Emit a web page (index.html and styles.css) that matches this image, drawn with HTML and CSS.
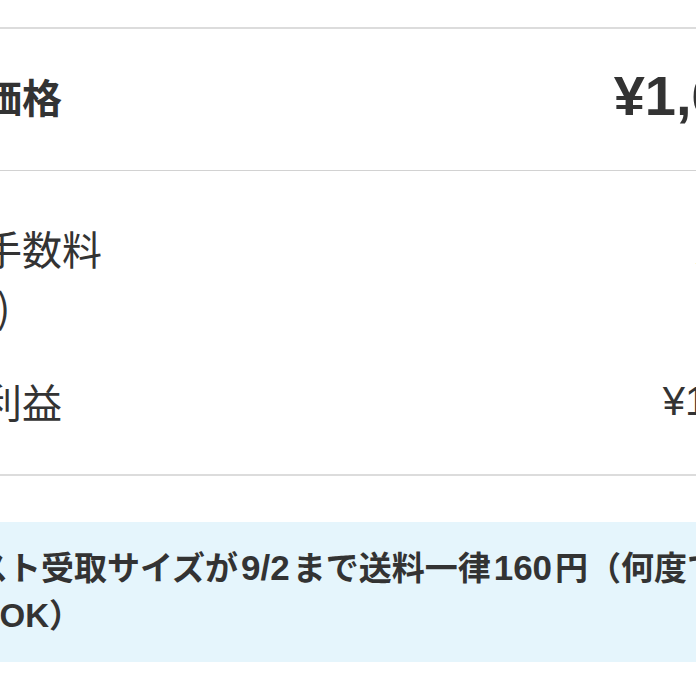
FILE: index.html
```html
<!DOCTYPE html>
<html lang="ja">
<head>
    <meta charset="UTF-8">
    <title>販売価格</title>
    <link rel="stylesheet" href="styles.css">
</head>
<body>
    <div class="sheet">
        <div class="price-row">
            <span class="label">販売価格</span>
            <span class="price">¥1,600</span>
        </div>

        <div class="breakdown">
            <div class="line">
                <span class="label-sub">販売手数料<br>(10%)</span>
                <span class="value">¥160</span>
            </div>
            <div class="line profit">
                <span class="label-sub">販売利益</span>
                <span class="value">¥1,440</span>
            </div>
        </div>

        <div class="notice">
            <p>ゆうパケットポスト受取サイズが<span class="num">9/2</span>まで送料一律<span class="num">160</span>円（何度でも<span class="num lead">1</span>回ずつ購入でもOK）</p>
        </div>
    </div>
</body>
</html>
```

FILE: styles.css
```css
body {
    margin: 0;
    background: #fff;
    color: #333;
    font-family: "Noto Sans CJK JP", "Noto Sans", sans-serif;
    overflow: hidden;
}
.sheet {
    margin-left: -98px;
    width: 883px;
    padding-top: 27px;
}
.price-row {
    display: flex;
    justify-content: space-between;
    align-items: center;
    box-sizing: border-box;
    height: 144px;
    padding-bottom: 8px;
    border-top: 2px solid #dcdcdc;
    border-bottom: 1px solid #d2d2d2;
}
.label {
    font-size: 40px;
    font-weight: bold;
}
.price {
    font-family: "Liberation Sans", Arial, sans-serif;
    font-size: 56px;
    font-weight: bold;
}
.breakdown {
    padding: 48px 0 44px 0;
    border-bottom: 2px solid #dcdcdc;
}
.line {
    display: flex;
    justify-content: space-between;
    align-items: center;
}
.line.profit {
    margin-top: 37px;
}
.label-sub {
    font-size: 40px;
    line-height: 58px;
}
.value {
    font-family: "Liberation Sans", Arial, sans-serif;
    font-size: 40px;
}
.notice {
    margin-top: 46px;
    margin-left: -158px;
    padding: 23px 12px 23px 0;
    background: #e5f5fc;
}
.notice p {
    margin: 0;
    font-family: "Liberation Sans", "Noto Sans CJK JP", sans-serif;
    font-size: 33px;
    font-weight: bold;
    line-height: 46px;
}
.num {
    margin: 0 3px;
    font-size: 35px;
}
.num.lead {
    margin: 0 5px 0 0;
}
```
